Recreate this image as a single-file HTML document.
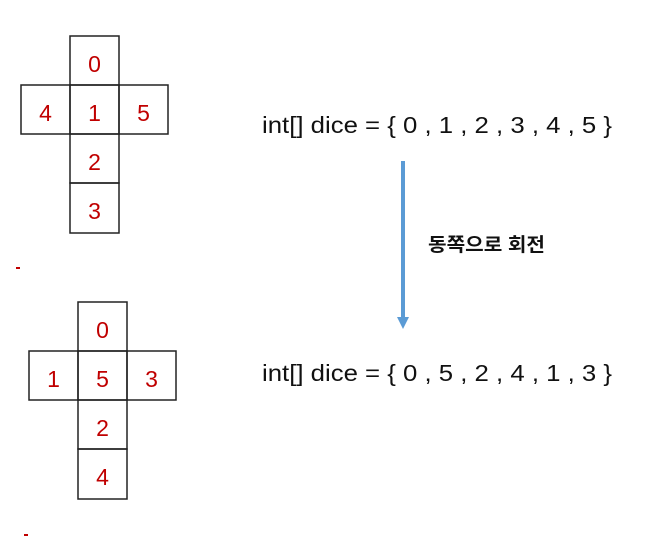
<!DOCTYPE html>
<html><head><meta charset="utf-8"><style>html,body{margin:0;padding:0;background:#fff;}svg{display:block}</style></head>
<body>
<svg width="647" height="544" xmlns="http://www.w3.org/2000/svg">
<g fill="none" stroke="#222" stroke-width="1.5">
<rect x="70" y="36" width="49" height="49"/>
<rect x="21" y="85" width="49" height="49"/>
<rect x="70" y="85" width="49" height="49"/>
<rect x="119" y="85" width="49" height="49"/>
<rect x="70" y="134" width="49" height="49"/>
<rect x="70" y="183" width="49" height="50"/>
<rect x="78" y="302" width="49" height="49"/>
<rect x="29" y="351" width="49" height="49"/>
<rect x="78" y="351" width="49" height="49"/>
<rect x="127" y="351" width="49" height="49"/>
<rect x="78" y="400" width="49" height="49"/>
<rect x="78" y="449" width="49" height="50"/>
</g>
<g fill="#c00000" font-family="Liberation Sans, sans-serif" font-size="23" text-anchor="middle">
<text x="94.5" y="72">0</text>
<text x="45.5" y="121">4</text>
<text x="94.5" y="121">1</text>
<text x="143.5" y="121">5</text>
<text x="94.5" y="170">2</text>
<text x="94.5" y="219">3</text>
<text x="102.5" y="338">0</text>
<text x="53.5" y="387">1</text>
<text x="102.5" y="387">5</text>
<text x="151.5" y="387">3</text>
<text x="102.5" y="436">2</text>
<text x="102.5" y="485">4</text>
</g>
<rect x="16" y="267" width="4" height="2" fill="#c00000"/>
<rect x="24" y="534" width="4" height="2" fill="#c00000"/>
<g font-family="Liberation Sans, sans-serif" font-size="23" fill="#111">
<text x="262" y="133" textLength="350" lengthAdjust="spacingAndGlyphs">int[] dice = { 0 , 1 , 2 , 3 , 4 , 5 }</text>
<text x="262" y="381" textLength="350" lengthAdjust="spacingAndGlyphs">int[] dice = { 0 , 5 , 2 , 4 , 1 , 3 }</text>
</g>
<rect x="401" y="161" width="4" height="158" fill="#5b9bd5"/>
<polygon points="397,317 409,317 403,329" fill="#5b9bd5"/>
<text x="428" y="251" font-family="Liberation Sans, 'Noto Sans CJK KR', sans-serif" font-size="19" font-weight="bold" fill="#111" textLength="117" lengthAdjust="spacingAndGlyphs">동쪽으로 회전</text>
</svg>
</body></html>
